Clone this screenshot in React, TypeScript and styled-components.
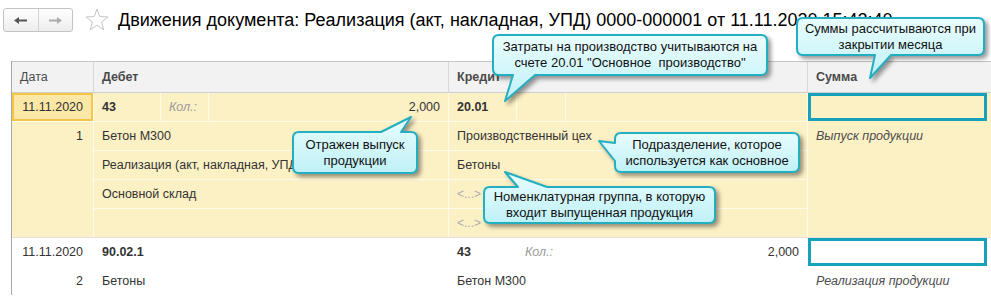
import styled, { createGlobalStyle } from 'styled-components';

const GlobalStyle = createGlobalStyle`
  body {
    margin: 0;
    background: #fff;
    font-family: 'Liberation Sans', Arial, sans-serif;
  }
`;

const Page = styled.div`
  position: relative;
  width: 991px;
  height: 298px;
  overflow: hidden;
  background: #fff;
`;

/* Title bar */
const TitleBar = styled.header`
  display: flex;
  align-items: center;
  height: 24px;
  padding: 8px 0 0 3px;
`;

const NavGroup = styled.div`
  display: flex;
  width: 70px;
  height: 24px;
  box-sizing: border-box;
  border: 1px solid #c2c2c2;
  border-radius: 3px;
  background: linear-gradient(#ffffff, #ededed);
  overflow: hidden;
`;

const NavButton = styled.button`
  flex: 1;
  display: flex;
  align-items: center;
  justify-content: center;
  padding: 0;
  border: none;
  background: transparent;

  & + & {
    border-left: 1px solid #d2d2d2;
  }
`;

const Star = styled.svg`
  margin-left: 12px;
`;

const Title = styled.h1`
  margin: 0 0 0 9px;
  font-size: 18px;
  font-weight: normal;
  line-height: 24px;
  color: #000;
  white-space: nowrap;
`;

/* Table */
const Table = styled.div`
  margin: 29px 0 0 11px;
  border-left: 1px solid #a8a8a8;
`;

const Header = styled.div`
  display: grid;
  grid-template-columns: 81px 354px 358px 1fr;
  column-gap: 1px;
  background: #d8d8d8;
  border-top: 1px solid #c6c6c6;
  border-bottom: 1px solid #cfcfcf;
`;

const HeadCell = styled.div<{ $bold?: boolean }>`
  height: 30px;
  line-height: 30px;
  padding-left: 8px;
  background: #f2f2f2;
  color: #4a4a4a;
  font-size: 12.5px;
  font-weight: ${(p) => (p.$bold ? 'bold' : 'normal')};
`;

type Tone = 'yellow' | 'white';

const Record = styled.div<{ $tone: Tone }>`
  --cell: ${(p) => (p.$tone === 'yellow' ? '#fcf0c5' : '#ffffff')};
  --line: ${(p) => (p.$tone === 'yellow' ? '#fffaea' : '#ffffff')};
  display: grid;
  grid-template-columns: 81px 354px 358px 1fr;
  column-gap: 1px;
  background: var(--line);
  border-top: ${(p) => (p.$tone === 'white' ? '1px solid #e2e2e2' : 'none')};
`;

const Column = styled.div`
  display: flex;
  flex-direction: column;
  gap: 1px;
`;

const Cell = styled.div<{
  $right?: boolean;
  $bold?: boolean;
  $italic?: boolean;
  $muted?: boolean;
  $fill?: boolean;
}>`
  flex: ${(p) => (p.$fill ? '1' : 'none')};
  height: ${(p) => (p.$fill ? 'auto' : '28px')};
  line-height: 28px;
  padding: 0 8px;
  background: var(--cell);
  font-size: 12.5px;
  color: ${(p) => (p.$muted ? '#9b9b9b' : p.$italic ? '#4d4d4d' : '#333')};
  font-weight: ${(p) => (p.$bold ? 'bold' : 'normal')};
  font-style: ${(p) => (p.$italic ? 'italic' : 'normal')};
  text-align: ${(p) => (p.$right ? 'right' : 'left')};
  white-space: nowrap;
  overflow: hidden;
`;

const DateCell = styled(Cell)<{ $active?: boolean }>`
  padding-right: 10px;
  text-align: right;
  background: ${(p) => (p.$active ? '#fce8a6' : 'var(--cell)')};
  box-shadow: ${(p) => (p.$active ? 'inset 0 0 0 2px #f3c648' : 'none')};
`;

const NumCell = styled(Cell)`
  padding-right: 10px;
`;

const AccountLine = styled.div<{ $cols: string }>`
  display: grid;
  grid-template-columns: ${(p) => p.$cols};
  column-gap: 1px;
  height: 28px;
`;

const Placeholder = styled(Cell)`
  color: #adadad;
  font-size: 12px;
`;

const SumBox = styled.div`
  height: 28px;
  margin-right: 4px;
  box-sizing: border-box;
  border: 3px solid #16a2ba;
  background: var(--cell);
`;

const SumColumn = styled(Column)`
  background: var(--cell);
`;

/* Callouts */
const Bubble = styled.div`
  position: absolute;
  z-index: 5;
  display: flex;
  align-items: center;
  justify-content: center;
  font-size: 13px;
  line-height: 16px;
  color: #111;
  text-align: center;
  white-space: pre;
`;

const BubbleShape = styled.svg`
  position: absolute;
  left: 0;
  top: 0;
  z-index: -1;
  overflow: visible;
  filter: drop-shadow(3px 3px 2px rgba(0, 0, 0, 0.4));
`;

const BubbleText = styled.span`
  position: relative;
`;

type Tail = { side: 'top' | 'bottom' | 'left'; a: number; b: number; tx: number; ty: number };

type Note = { x: number; y: number; w: number; h: number; tail: Tail; text: string };

const bubblePath = (w: number, h: number, r: number, t: Tail) => {
  const d: string[] = [`M ${r} 0`];
  if (t.side === 'top') d.push(`L ${t.a} 0 L ${t.tx} ${t.ty} L ${t.b} 0`);
  d.push(`L ${w - r} 0 Q ${w} 0 ${w} ${r}`);
  d.push(`L ${w} ${h - r} Q ${w} ${h} ${w - r} ${h}`);
  if (t.side === 'bottom') d.push(`L ${t.b} ${h} L ${t.tx} ${t.ty} L ${t.a} ${h}`);
  d.push(`L ${r} ${h} Q 0 ${h} 0 ${h - r}`);
  if (t.side === 'left') d.push(`L 0 ${t.b} L ${t.tx} ${t.ty} L 0 ${t.a}`);
  d.push(`L 0 ${r} Q 0 0 ${r} 0 Z`);
  return d.join(' ');
};

const notes: Note[] = [
  {
    x: 493,
    y: 35,
    w: 274,
    h: 40,
    tail: { side: 'bottom', a: 20, b: 42, tx: 12, ty: 66 },
    text: 'Затраты на производство учитываются на\nсчете 20.01 "Основное  производство"',
  },
  {
    x: 797,
    y: 18,
    w: 187,
    h: 37,
    tail: { side: 'bottom', a: 78, b: 94, tx: 73, ty: 60 },
    text: 'Суммы рассчитываются при\nзакрытии месяца',
  },
  {
    x: 293,
    y: 132,
    w: 124,
    h: 41,
    tail: { side: 'top', a: 88, b: 108, tx: 118, ty: -15 },
    text: 'Отражен выпуск\nпродукции',
  },
  {
    x: 615,
    y: 133,
    w: 184,
    h: 39,
    tail: { side: 'left', a: 10, b: 28, tx: -16, ty: 8 },
    text: 'Подразделение, которое\nиспользуется как основное',
  },
  {
    x: 484,
    y: 187,
    w: 231,
    h: 36,
    tail: { side: 'top', a: 34, b: 63, tx: 21, ty: -15 },
    text: 'Номенклатурная группа, в которую\nвходит выпущенная продукция',
  },
];

const Callout = ({ note, id }: { note: Note; id: string }) => (
  <Bubble style={{ left: note.x, top: note.y, width: note.w, height: note.h }}>
    <BubbleShape width={note.w} height={note.h}>
      <defs>
        <linearGradient id={id} x1='0' y1='0' x2='0' y2='1'>
          <stop offset='0' stopColor='#e9fdfe' />
          <stop offset='1' stopColor='#bff1f7' />
        </linearGradient>
      </defs>
      <path
        d={bubblePath(note.w, note.h, 6, note.tail)}
        fill={`url(#${id})`}
        stroke='#23afc1'
        strokeWidth='2'
        strokeLinejoin='round'
      />
    </BubbleShape>
    <BubbleText>{note.text}</BubbleText>
  </Bubble>
);

const Arrow = ({ dir, color }: { dir: 'left' | 'right'; color: string }) => (
  <svg width='13' height='7' viewBox='0 0 13 7'>
    <path
      d='M0 3.5 L5 0 L5 2.4 L13 2.4 L13 4.6 L5 4.6 L5 7 Z'
      fill={color}
      transform={dir === 'right' ? 'matrix(-1 0 0 1 13 0)' : undefined}
    />
  </svg>
);

const App = () => {
  return (
    <Page>
      <GlobalStyle />
      <TitleBar>
        <NavGroup>
          <NavButton>
            <Arrow dir='left' color='#555' />
          </NavButton>
          <NavButton>
            <Arrow dir='right' color='#ababab' />
          </NavButton>
        </NavGroup>
        <Star width='24' height='24' viewBox='0 0 24 24'>
          <polygon
            points='12,1 14.82,8.62 22.94,8.95 16.56,13.98 18.76,21.8 12,17.3 5.24,21.8 7.44,13.98 1.06,8.95 9.18,8.62'
            fill='none'
            stroke='#c4c4c4'
            strokeWidth='1'
          />
        </Star>
        <Title>Движения документа: Реализация (акт, накладная, УПД) 0000-000001 от 11.11.2020 15:42:40</Title>
      </TitleBar>

      <Table>
        <Header>
          <HeadCell>Дата</HeadCell>
          <HeadCell $bold>Дебет</HeadCell>
          <HeadCell $bold>Кредит</HeadCell>
          <HeadCell $bold>Сумма</HeadCell>
        </Header>

        <Record $tone='yellow'>
          <Column>
            <DateCell $active>11.11.2020</DateCell>
            <NumCell $right $fill>
              1
            </NumCell>
          </Column>
          <Column>
            <AccountLine $cols='66px 47px 1fr'>
              <Cell $bold>43</Cell>
              <Cell $italic $muted>
                Кол.:
              </Cell>
              <Cell $right>2,000</Cell>
            </AccountLine>
            <Cell>Бетон М300</Cell>
            <Cell>Реализация (акт, накладная, УПД)</Cell>
            <Cell>Основной склад</Cell>
            <Cell $fill />
          </Column>
          <Column>
            <AccountLine $cols='67px 48px 1fr'>
              <Cell $bold>20.01</Cell>
              <Cell />
              <Cell />
            </AccountLine>
            <Cell>Производственный цех</Cell>
            <Cell>Бетоны</Cell>
            <Placeholder>&lt;...&gt;</Placeholder>
            <Placeholder $fill>&lt;...&gt;</Placeholder>
          </Column>
          <SumColumn>
            <SumBox />
            <Cell $italic $fill>
              Выпуск продукции
            </Cell>
          </SumColumn>
        </Record>

        <Record $tone='white'>
          <Column>
            <DateCell>11.11.2020</DateCell>
            <NumCell $right $fill>
              2
            </NumCell>
          </Column>
          <Column>
            <Cell $bold>90.02.1</Cell>
            <Cell>Бетоны</Cell>
          </Column>
          <Column>
            <AccountLine $cols='67px 48px 1fr'>
              <Cell $bold>43</Cell>
              <Cell $italic $muted>
                Кол.:
              </Cell>
              <Cell $right>2,000</Cell>
            </AccountLine>
            <Cell>Бетон М300</Cell>
          </Column>
          <SumColumn>
            <SumBox />
            <Cell $italic $fill>
              Реализация продукции
            </Cell>
          </SumColumn>
        </Record>
      </Table>

      {notes.map((note, i) => (
        <Callout key={i} note={note} id={`bubble-fill-${i}`} />
      ))}
    </Page>
  );
};

export default App;
